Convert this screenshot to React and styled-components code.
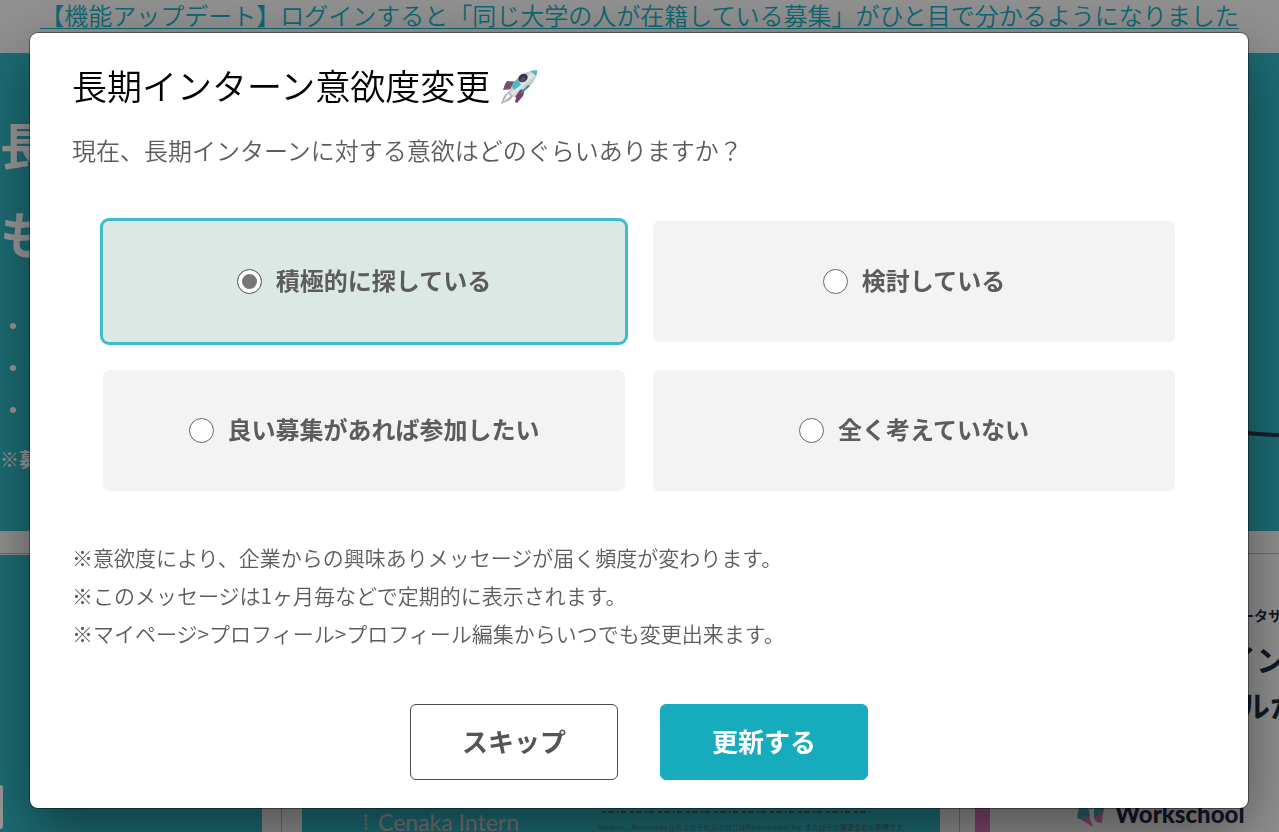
import styled, { createGlobalStyle } from "styled-components";
import { useState } from "react";

const options = [
    { id: 'active', label: '積極的に探している' },
    { id: 'considering', label: '検討している' },
    { id: 'ifGood', label: '良い募集があれば参加したい' },
    { id: 'none', label: '全く考えていない' },
];

const notes = [
    '※意欲度により、企業からの興味ありメッセージが届く頻度が変わります。',
    '※このメッセージは1ヶ月毎などで定期的に表示されます。',
    '※マイページ>プロフィール>プロフィール編集からいつでも変更出来ます。',
];

function App(){

    return(
        <>
            <GlobalStyle/>
            <Background/>
            <Overlay>
                <MotivationModal/>
            </Overlay>
        </>
    )
}

function MotivationModal(){

    const [selected, setSelected] = useState('active');

    return(
        <Modal role="dialog" aria-modal="true" aria-labelledby="modal-title">
            <Title id="modal-title">長期インターン意欲度変更 <Rocket/></Title>
            <Lead id="modal-lead">現在、長期インターンに対する意欲はどのぐらいありますか？</Lead>

            <Options role="radiogroup" aria-labelledby="modal-lead">
                {options.map(({id, label}) => (
                    <Option key={id} htmlFor={id} $selected={selected === id}>
                        <Radio
                            type="radio"
                            name="motivation"
                            id={id}
                            checked={selected === id}
                            onChange={() => setSelected(id)}
                        />
                        <span>{label}</span>
                    </Option>
                ))}
            </Options>

            <Notes>
                {notes.map((note) => <p key={note}>{note}</p>)}
            </Notes>

            <Actions>
                <Button type="button">スキップ</Button>
                <Button type="button" $primary>更新する</Button>
            </Actions>
        </Modal>
    )
}

function Background(){

    return(
        <Page>
            <NewsBar>
                <a href="#update">【機能アップデート】ログインすると「同じ大学の人が在籍している募集」がひと目で分かるようになりました</a>
            </NewsBar>

            <Hero>
                <HeroCopy>
                    <h2>長<br/>も</h2>
                    <ul>
                        <li/>
                        <li/>
                        <li/>
                    </ul>
                    <p>※募</p>
                </HeroCopy>
                <HeroLine viewBox="0 0 60 12">
                    <path d="M0 2 C20 3 40 6 60 6" fill="none" stroke="#2b3445" strokeWidth="4"/>
                </HeroLine>
            </Hero>

            <Cards>
                <Card>
                    <Banner>
                        <Pill/>
                    </Banner>
                </Card>
                <Card>
                    <Banner>
                        <BannerFooter>
                            <Brand>
                                <svg width="8" height="20" viewBox="0 0 8 20">
                                    <path d="M4 2V18M2 5L4 2L6 5M2 15L4 18L6 15M3 8H5M3 12H5" fill="none" stroke="#cfc4c2" strokeWidth="1"/>
                                </svg>
                                Cenaka Intern
                            </Brand>
                            <Legal>
                                <svg width="272" height="6" viewBox="0 0 272 6">
                                    <path d="M4 2H272" stroke="#4f6870" strokeWidth="2" strokeDasharray="4 2 6 3 2 2 5 4"/>
                                </svg>
                                <small>Amazon、Amazon.co.jpおよびそれらのロゴはAmazon.com, Inc. またはその関連会社の商標です。</small>
                            </Legal>
                        </BannerFooter>
                    </Banner>
                </Card>
                <Card>
                    <School>
                        <Headline>
                            <small>データサ</small>
                            <p>イン</p>
                            <p className="indent">ルか</p>
                        </Headline>
                        <SchoolFooter>
                            <Strip/>
                            <svg width="28" height="28" viewBox="0 0 28 28">
                                <path d="M0 18L3 2L11 6L13 16L10 21Z" fill="#3ba3b0"/>
                                <path d="M4 2L20 1L14 9Z" fill="#2c7f94"/>
                                <path d="M17 8L28 3L26 14L17 18Z" fill="#3ba3b0"/>
                                <path d="M17 18L26 12L25 23L19 22Z" fill="#d673a8"/>
                                <path d="M3 19L12 16L16 27Z" fill="#d673a8"/>
                            </svg>
                            <strong>Workschool</strong>
                        </SchoolFooter>
                    </School>
                </Card>
            </Cards>
        </Page>
    )
}

function Rocket(){

    return(
        <svg width="38" height="38" viewBox="0 0 38 38" aria-hidden="true">
            <defs>
                <linearGradient id="hull" x1="0" y1="0" x2="1" y2="1">
                    <stop offset="0.2" stopColor="#8c9094"/>
                    <stop offset="0.5" stopColor="#e6e8ea"/>
                    <stop offset="0.9" stopColor="#7c8084"/>
                </linearGradient>
            </defs>
            <path d="M5 18L7 15L19 16L13 23L3 24Z" fill="#77506f"/>
            <path d="M25 23L23 30L17 37L15 36L17 28Z" fill="#77406a"/>
            <path d="M1 38L4 30L9 25L14 29L10 34Z" fill="#a9adb1"/>
            <path d="M3 36L8 27L11 30Z" fill="#f4f5f6"/>
            <path d="M9 26C13 14 22 5 37 4C38 14 27 25 14 31Z" fill="url(#hull)"/>
            <path d="M30 5L37 4C37 6 37 8 36 10Z" fill="#55b7c8"/>
            <path d="M14 16L18 14L21 19L14 24L12 20Z" fill="#43b9cf"/>
            <path d="M19 28L28 19L30 20L21 28Z" fill="#2b8fa4"/>
            <ellipse cx="23" cy="12" rx="5" ry="4" transform="rotate(-35 23 12)" fill="#3b3341"/>
            <ellipse cx="23" cy="13" rx="3" ry="2" transform="rotate(-35 23 13)" fill="#5c4a62"/>
            <path d="M15 31L20 24L23 23L18 32Z" fill="#77406a"/>
        </svg>
    )
}

const GlobalStyle = createGlobalStyle`

    *{
        box-sizing: border-box;
        margin: 0;
        padding: 0;
    }
    body{
        font-family: "Noto Sans CJK JP", sans-serif;
        color: #5c5c5c;
        background-color: #FFFFFF;
        overflow: hidden;
    }
    button, input{
        font-family: inherit;
    }
`

const Overlay = styled.div`
    position: fixed;
    inset: 0;
    display: flex;
    align-items: flex-start;
    padding: 33px 31px 0 30px;
    background-color: rgba(0, 0, 0, 0.4);
`

const Modal = styled.section`
    width: 100%;
    padding: 26px 42px 28px;
    background-color: #FFFFFF;
    border-radius: 8px;
    box-shadow: 0 0 0 1px rgba(0, 0, 0, 0.4), 0 22px 60px rgba(0, 0, 0, 0.45);
`

const Title = styled.h1`
    display: flex;
    align-items: center;
    gap: 10px;
    font-size: 35px;
    font-weight: 350;
    line-height: 52px;
    color: #000000;
`

const Lead = styled.p`
    margin-top: 21px;
    font-size: 24px;
    font-weight: 350;
    line-height: 36px;
`

const Options = styled.div`
    display: grid;
    grid-template-columns: 1fr 1fr;
    gap: 28px;
    margin-top: 53px;
    padding: 0 31px;
`

const Option = styled.label`
    display: flex;
    align-items: center;
    justify-content: center;
    gap: 14px;
    height: 121px;
    border-radius: 6px;
    font-size: 24px;
    font-weight: 700;
    background-color: ${({$selected}) => $selected ? '#dce8e4' : '#f3f3f3'};
    box-shadow: ${({$selected}) => $selected ? '0 0 0 3px #3dbccb' : 'none'};
    cursor: pointer;

    span{
        padding-bottom: 4px;
    }
`

const Radio = styled.input`
    appearance: none;
    width: 25px;
    height: 25px;
    border: 1px solid #666666;
    border-radius: 50%;
    background-color: #FFFFFF;

    &:checked{
        background-color: #767676;
        box-shadow: inset 0 0 0 4px #FFFFFF;
    }
`

const Notes = styled.div`
    margin-top: 47px;
    font-size: 21px;
    font-weight: 350;
    line-height: 38px;
`

const Actions = styled.div`
    display: flex;
    justify-content: center;
    gap: 42px;
    margin-top: 52px;
`

const Button = styled.button`
    width: 208px;
    height: 76px;
    padding-bottom: 4px;
    border: 1px solid ${({$primary}) => $primary ? '#17acbd' : '#4a4a4a'};
    border-radius: 6px;
    font-size: 26px;
    font-weight: 700;
    color: ${({$primary}) => $primary ? '#FFFFFF' : '#555555'};
    background-color: ${({$primary}) => $primary ? '#17acbd' : '#FFFFFF'};
    cursor: pointer;
`

const Page = styled.div`
    display: flex;
    flex-direction: column;
    height: 100vh;
    overflow: hidden;
    background-color: #f0f0f0;
`

const NewsBar = styled.div`
    display: flex;
    flex-shrink: 0;
    justify-content: center;
    height: 53px;
    white-space: nowrap;

    a{
        font-size: 24px;
        font-weight: 350;
        line-height: 30px;
        color: #17acbd;
        text-decoration-thickness: 1px;
        text-underline-offset: 3px;
    }
`

const Hero = styled.section`
    display: flex;
    flex-shrink: 0;
    justify-content: space-between;
    align-items: flex-end;
    height: 478px;
    background-color: #30b4c2;
`

const HeroCopy = styled.div`
    align-self: flex-start;
    padding-top: 46px;
    color: #FFFFFF;

    h2{
        font-size: 50px;
        font-weight: 700;
        line-height: 89px;
    }
    ul{
        display: flex;
        flex-direction: column;
        gap: 36px;
        margin-top: 46px;
        padding-left: 10px;
        list-style: none;
    }
    li{
        width: 6px;
        height: 6px;
        border-radius: 50%;
        background-color: #FFFFFF;
    }
    p{
        margin-top: 31px;
        font-size: 19px;
        font-weight: 700;
        line-height: 30px;
    }
`

const HeroLine = styled.svg`
    width: 60px;
    height: 12px;
    margin-bottom: 90px;
`

const Cards = styled.section`
    display: grid;
    flex: 1;
    grid-template-columns: 282fr 678fr 319fr;
    margin-top: 22px;
    border-top: 1px solid #b5b5b5;
`

const Card = styled.article`
    display: flex;
    min-width: 0;
    border-right: 1px solid #b5b5b5;
    padding: 1px 19px 0 20px;

    &:first-child{
        padding-left: 0;
    }
    &:last-child{
        border-right: none;
        padding: 0;
    }
`

const Banner = styled.div`
    display: flex;
    flex: 1;
    flex-direction: column;
    justify-content: flex-end;
    min-width: 0;
    background-color: #30b4c2;
`

const Pill = styled.div`
    width: 3px;
    height: 44px;
    margin-bottom: 3px;
    border-radius: 0 8px 8px 0;
    background-color: #FFFFFF;
`

const BannerFooter = styled.div`
    display: flex;
    align-items: flex-end;
    gap: 79px;
    height: 24px;
    padding-left: 60px;
    white-space: nowrap;
`

const Brand = styled.span`
    display: flex;
    align-items: center;
    gap: 8px;
    font-family: Lato, sans-serif;
    font-size: 23px;
    line-height: 20px;
    color: #cfc4c2;
`

const Legal = styled.div`
    display: flex;
    flex-direction: column;
    gap: 6px;

    small{
        font-size: 7px;
        line-height: 10px;
        color: #4f6870;
    }
`

const School = styled.div`
    display: flex;
    flex: 1;
    flex-direction: column;
    justify-content: space-between;
    min-width: 0;
    color: #1f2a3d;
`

const Headline = styled.div`
    align-self: flex-end;
    width: 53px;
    padding-top: 51px;
    font-weight: 700;
    white-space: nowrap;

    small{
        display: block;
        margin-bottom: 10px;
        font-size: 14px;
        line-height: 20px;
    }
    p{
        font-size: 30px;
        line-height: 46px;
    }
    .indent{
        padding-left: 14px;
    }
`

const SchoolFooter = styled.div`
    display: flex;
    align-items: flex-start;
    height: 34px;
    padding-left: 15px;

    svg{
        margin: 2px 10px 0 87px;
    }
    strong{
        font-family: Lato, sans-serif;
        font-size: 24px;
        font-weight: 900;
        line-height: 32px;
    }
`

const Strip = styled.span`
    width: 15px;
    height: 34px;
    background-color: #d673b8;
`

export default App;
